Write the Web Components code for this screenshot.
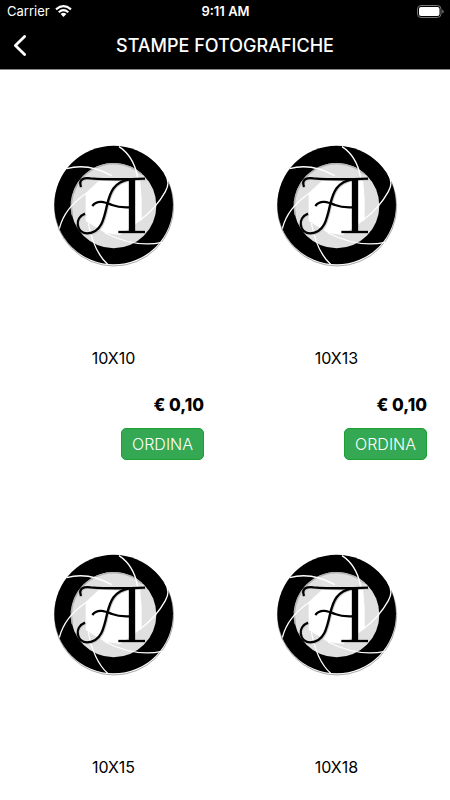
<!DOCTYPE html>
<html lang="it">
<head>
  <meta charset="utf-8">
  <meta name="viewport" content="width=device-width, initial-scale=1">
  <title>Stampe fotografiche</title>
  <style>
    body {
      margin: 0;
      background: #fff;
      color: #000;
      font-family: Inter, "Liberation Sans", sans-serif;
    }
  </style>
</head>
<body>
  <print-shop>
    <status-bar slot="top" carrier="Carrier" time="9:11 AM"></status-bar>
    <nav-header slot="top">STAMPE FOTOGRAFICHE</nav-header>
    <product-card price="€ 0,10">10X10</product-card>
    <product-card price="€ 0,10">10X13</product-card>
    <product-card>10X15</product-card>
    <product-card>10X18</product-card>
  </print-shop>

  <script>
    class PrintShop extends HTMLElement {
      connectedCallback() {
        this.attachShadow({ mode: "open" });
        this.shadowRoot.innerHTML = `
          <style>
            :host {
              display: block;
            }

            header {
              background: #000;
              color: #fff;
              border-bottom: 1px solid #8a8a8a;
            }

            main {
              display: grid;
              grid-template-columns: 1fr 1fr;
              padding: 0 2px;
            }
          </style>

          <header><slot name="top"></slot></header>
          <main><slot></slot></main>
        `;
      }
    }

    class StatusBar extends HTMLElement {
      connectedCallback() {
        this.attachShadow({ mode: "open" });
        this.shadowRoot.innerHTML = `
          <style>
            :host {
              display: grid;
              grid-template-columns: 1fr auto 1fr;
              align-items: center;
              height: 22px;
              padding: 0 6px 0 7px;
              font-size: 13px;
              line-height: 22px;
            }

            .left {
              display: flex;
              align-items: center;
              gap: 5px;
            }

            .time {
              font-weight: 600;
            }

            .battery {
              justify-self: end;
            }

            svg {
              display: block;
            }
          </style>

          <div class="left">
            <span>${this.getAttribute("carrier")}</span>
            <svg width="17" height="12" viewBox="0 0 17 12" fill="none" stroke="#fff" stroke-width="2.1">
              <path d="M1 4.4Q8.5-2 16 4.4M3.7 7.2q4.8-4 9.6 0"/>
              <path d="M5.6 9.1q2.9-2.5 5.8 0L8.5 12z" fill="#fff" stroke="none"/>
            </svg>
          </div>
          <div class="time">${this.getAttribute("time")}</div>
          <svg class="battery" width="27" height="13" viewBox="0 0 27 13">
            <rect x=".5" y=".5" width="23.5" height="12" rx="3.6" fill="none" stroke="#777"/>
            <rect x="2" y="2" width="20.5" height="9" rx="2" fill="#fff"/>
            <path d="M25.3 4.4q1.4.7 1.4 2.1t-1.4 2.1z" fill="#888"/>
          </svg>
        `;
      }
    }

    class NavHeader extends HTMLElement {
      connectedCallback() {
        this.attachShadow({ mode: "open" });
        this.shadowRoot.innerHTML = `
          <style>
            :host {
              display: grid;
              grid-template-columns: 1fr auto 1fr;
              align-items: center;
              height: 47px;
            }

            button {
              justify-self: start;
              display: flex;
              padding: 10px 12px;
              border: none;
              background: none;
              color: inherit;
              cursor: pointer;
            }

            h1 {
              margin: 0;
              font-size: 18px;
              font-weight: 500;
              line-height: 23px;
            }
          </style>

          <button type="button" aria-label="Indietro">
            <svg width="16" height="23" viewBox="0 0 16 23" fill="none" stroke="currentColor" stroke-width="2.8" stroke-linecap="round" stroke-linejoin="round">
              <path d="M12.6 2.5 3.4 11.5l9.2 9"/>
            </svg>
          </button>
          <h1><slot></slot></h1>
        `;
      }
    }

    class ShutterLogo extends HTMLElement {
      connectedCallback() {
        this.attachShadow({ mode: "open" });
        this.shadowRoot.innerHTML = `
          <style>
            :host {
              display: block;
            }

            svg {
              display: block;
            }
          </style>

          <svg width="139" height="138" viewBox="-3 0 417 414" fill="none" aria-hidden="true">
            <circle cx="207" cy="208" r="179" fill="#fff" stroke="#aaa" stroke-width="3"/>
            <circle cx="206" cy="204" r="178" fill="#000"/>
            <circle cx="206" cy="206" r="128" fill="#e0e0e0"/>
            <path d="M82 234A127 127 0 0 1 290 112" stroke="#b4b4b4" stroke-width="5"/>
            <!-- opening between the blades -->
            <path d="M122 168 165 128H285L290 185V248L225 294 180 288 122 252z" fill="#fff"/>
            <g stroke="#fff" stroke-width="4">
              <path d="M222 29Q266 58 277 118L286 160"/>
              <path d="M65 95Q130 77 200 116"/>
              <path d="M43 275Q58 213 125 168"/>
              <path d="M188 382Q146 344 130 258"/>
              <path d="M351 316Q270 333 180 288"/>
              <path d="M360 110Q377 137 361 164 334 213 285 250"/>
            </g>
            <g stroke="#ccc" stroke-width="6" transform="translate(3 3)">
              <path d="M108 150C99 126 118 121 137 124Q200 129 300 125"/>
              <path d="M253 127C206 135 196 166 187 200 178 242 170 288 127 289 94 288 86 244 120 230"/>
            </g>
            <g stroke="#000" stroke-width="7">
              <path d="M108 150C99 126 118 121 137 124Q200 129 300 125"/>
              <path d="M253 127C206 135 196 166 187 200 178 242 170 288 127 289 94 288 86 244 120 230"/>
              <path d="M142 207C157 186 181 196 201 204S232 212 253 211"/>
              <path d="M220 285H300"/>
              <path d="M261 125V285" stroke-width="19"/>
            </g>
          </svg>
        `;
      }
    }

    class ProductCard extends HTMLElement {
      connectedCallback() {
        const price = this.getAttribute("price");

        this.attachShadow({ mode: "open" });
        this.shadowRoot.innerHTML = `
          <style>
            :host {
              display: flex;
              flex-direction: column;
              padding: 67px 21px 19px;
            }

            shutter-logo {
              align-self: center;
              margin-bottom: 71px;
            }

            h2 {
              margin: 0;
              font-size: 16px;
              font-weight: 400;
              line-height: 24px;
              text-align: center;
            }

            .price {
              margin: 23px 0 11px;
              font-size: 17px;
              font-weight: 800;
              line-height: 24px;
              text-align: right;
            }

            button {
              align-self: flex-end;
              padding: 0 10px;
              border: 1px solid #1aa034;
              border-radius: 5px;
              background: #34a853;
              color: #fff;
              font-family: inherit;
              font-size: 16px;
              font-weight: 300;
              line-height: 30px;
              cursor: pointer;
            }
          </style>

          <shutter-logo></shutter-logo>
          <h2><slot></slot></h2>
          ${price ? `<p class="price">${price}</p><button type="button">ORDINA</button>` : ""}
        `;
      }
    }

    customElements.define("print-shop", PrintShop);
    customElements.define("status-bar", StatusBar);
    customElements.define("nav-header", NavHeader);
    customElements.define("shutter-logo", ShutterLogo);
    customElements.define("product-card", ProductCard);
  </script>
</body>
</html>
